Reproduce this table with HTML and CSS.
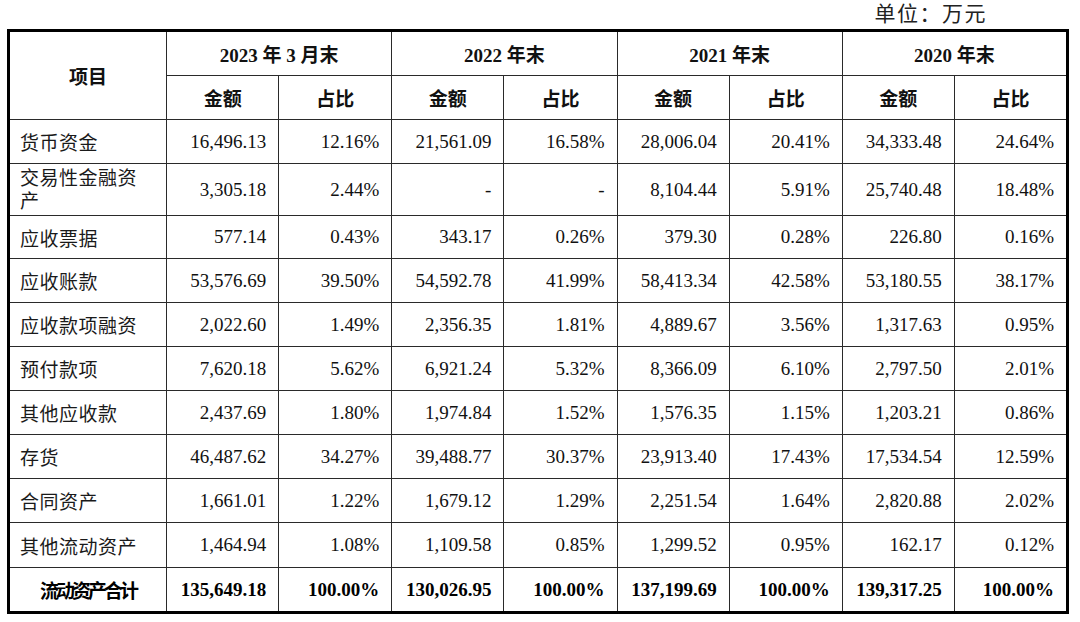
FILE: index.html
```html
<!DOCTYPE html>
<html lang="zh-CN">
<head>
<meta charset="utf-8">
<title>流动资产构成</title>
<link rel="stylesheet" href="styles.css">
</head>
<body>
<div class="page">
  <div class="unit">单位：万元</div>
  <table class="fin">
    <colgroup>
      <col class="c-item">
      <col class="c-a"><col class="c-b">
      <col class="c-a"><col class="c-b">
      <col class="c-a"><col class="c-b">
      <col class="c-a"><col class="c-b">
    </colgroup>
    <thead>
      <tr class="r-h1">
        <th rowspan="2" class="hd">项目</th>
        <th colspan="2" class="hd">2023 年 3 月末</th>
        <th colspan="2" class="hd">2022 年末</th>
        <th colspan="2" class="hd">2021 年末</th>
        <th colspan="2" class="hd">2020 年末</th>
      </tr>
      <tr class="r-h2">
        <th class="hd">金额</th><th class="hd">占比</th>
        <th class="hd">金额</th><th class="hd">占比</th>
        <th class="hd">金额</th><th class="hd">占比</th>
        <th class="hd">金额</th><th class="hd">占比</th>
      </tr>
    </thead>
    <tbody>
      <tr class="r">
        <td class="name">货币资金</td>
        <td class="num">16,496.13</td><td class="num">12.16%</td>
        <td class="num">21,561.09</td><td class="num">16.58%</td>
        <td class="num">28,006.04</td><td class="num">20.41%</td>
        <td class="num">34,333.48</td><td class="num">24.64%</td>
      </tr>
      <tr class="r-tall">
        <td class="name wrap">交易性金融资产</td>
        <td class="num">3,305.18</td><td class="num">2.44%</td>
        <td class="num">-</td><td class="num">-</td>
        <td class="num">8,104.44</td><td class="num">5.91%</td>
        <td class="num">25,740.48</td><td class="num">18.48%</td>
      </tr>
      <tr class="r-short">
        <td class="name">应收票据</td>
        <td class="num">577.14</td><td class="num">0.43%</td>
        <td class="num">343.17</td><td class="num">0.26%</td>
        <td class="num">379.30</td><td class="num">0.28%</td>
        <td class="num">226.80</td><td class="num">0.16%</td>
      </tr>
      <tr class="r">
        <td class="name">应收账款</td>
        <td class="num">53,576.69</td><td class="num">39.50%</td>
        <td class="num">54,592.78</td><td class="num">41.99%</td>
        <td class="num">58,413.34</td><td class="num">42.58%</td>
        <td class="num">53,180.55</td><td class="num">38.17%</td>
      </tr>
      <tr class="r">
        <td class="name">应收款项融资</td>
        <td class="num">2,022.60</td><td class="num">1.49%</td>
        <td class="num">2,356.35</td><td class="num">1.81%</td>
        <td class="num">4,889.67</td><td class="num">3.56%</td>
        <td class="num">1,317.63</td><td class="num">0.95%</td>
      </tr>
      <tr class="r">
        <td class="name">预付款项</td>
        <td class="num">7,620.18</td><td class="num">5.62%</td>
        <td class="num">6,921.24</td><td class="num">5.32%</td>
        <td class="num">8,366.09</td><td class="num">6.10%</td>
        <td class="num">2,797.50</td><td class="num">2.01%</td>
      </tr>
      <tr class="r">
        <td class="name">其他应收款</td>
        <td class="num">2,437.69</td><td class="num">1.80%</td>
        <td class="num">1,974.84</td><td class="num">1.52%</td>
        <td class="num">1,576.35</td><td class="num">1.15%</td>
        <td class="num">1,203.21</td><td class="num">0.86%</td>
      </tr>
      <tr class="r">
        <td class="name">存货</td>
        <td class="num">46,487.62</td><td class="num">34.27%</td>
        <td class="num">39,488.77</td><td class="num">30.37%</td>
        <td class="num">23,913.40</td><td class="num">17.43%</td>
        <td class="num">17,534.54</td><td class="num">12.59%</td>
      </tr>
      <tr class="r">
        <td class="name">合同资产</td>
        <td class="num">1,661.01</td><td class="num">1.22%</td>
        <td class="num">1,679.12</td><td class="num">1.29%</td>
        <td class="num">2,251.54</td><td class="num">1.64%</td>
        <td class="num">2,820.88</td><td class="num">2.02%</td>
      </tr>
      <tr class="r-plus">
        <td class="name">其他流动资产</td>
        <td class="num">1,464.94</td><td class="num">1.08%</td>
        <td class="num">1,109.58</td><td class="num">0.85%</td>
        <td class="num">1,299.52</td><td class="num">0.95%</td>
        <td class="num">162.17</td><td class="num">0.12%</td>
      </tr>
      <tr class="r total">
        <td class="name sum">流动资产合计</td>
        <td class="num">135,649.18</td><td class="num">100.00%</td>
        <td class="num">130,026.95</td><td class="num">100.00%</td>
        <td class="num">137,199.69</td><td class="num">100.00%</td>
        <td class="num">139,317.25</td><td class="num">100.00%</td>
      </tr>
    </tbody>
  </table>
</div>
</body>
</html>
```

FILE: styles.css
```css
html, body {
  margin: 0;
  padding: 0;
  background: #ffffff;
}

body {
  font-family: "Liberation Serif", "Noto Sans CJK SC", serif;
  color: #111111;
  font-size: 19px;
}

.page {
  width: 1080px;
  height: 622px;
  box-sizing: border-box;
}

.unit {
  height: 29px;
  line-height: 28px;
  text-align: right;
  padding-right: 93px;
  font-size: 21px;
  letter-spacing: 1.5px;
  color: #222222;
}

.fin {
  margin-left: 7px;
  width: 1062px;
  border-collapse: collapse;
  table-layout: fixed;
  border: 3px solid #000000;
}

.c-item { width: 158px; }
.c-a { width: 112px; }
.c-b { width: 113px; }

.fin th,
.fin td {
  border: 1px solid #2a2a2a;
  padding: 0;
  vertical-align: middle;
}

.hd {
  font-weight: 700;
  text-align: center;
  color: #111111;
}

.r-h1 > th { height: 43px; }
.r-h2 > th { height: 43px; }
.r > td { height: 43px; }
.r-tall > td { height: 51px; }
.r-short > td { height: 42px; }
.r-plus > td { height: 44px; }

.name {
  text-align: left;
  padding-left: 10px !important;
  padding-right: 20px !important;
  letter-spacing: 0.5px;
  color: #1a1a1a;
}

.name.wrap {
  line-height: 23px;
}

.num {
  text-align: right;
  padding-right: 12px !important;
  color: #111111;
}

.total td {
  font-weight: 700;
  color: #000000;
}

.name.sum {
  text-align: center;
  padding-left: 0 !important;
  padding-right: 0 !important;
  letter-spacing: -3px;
}
```
